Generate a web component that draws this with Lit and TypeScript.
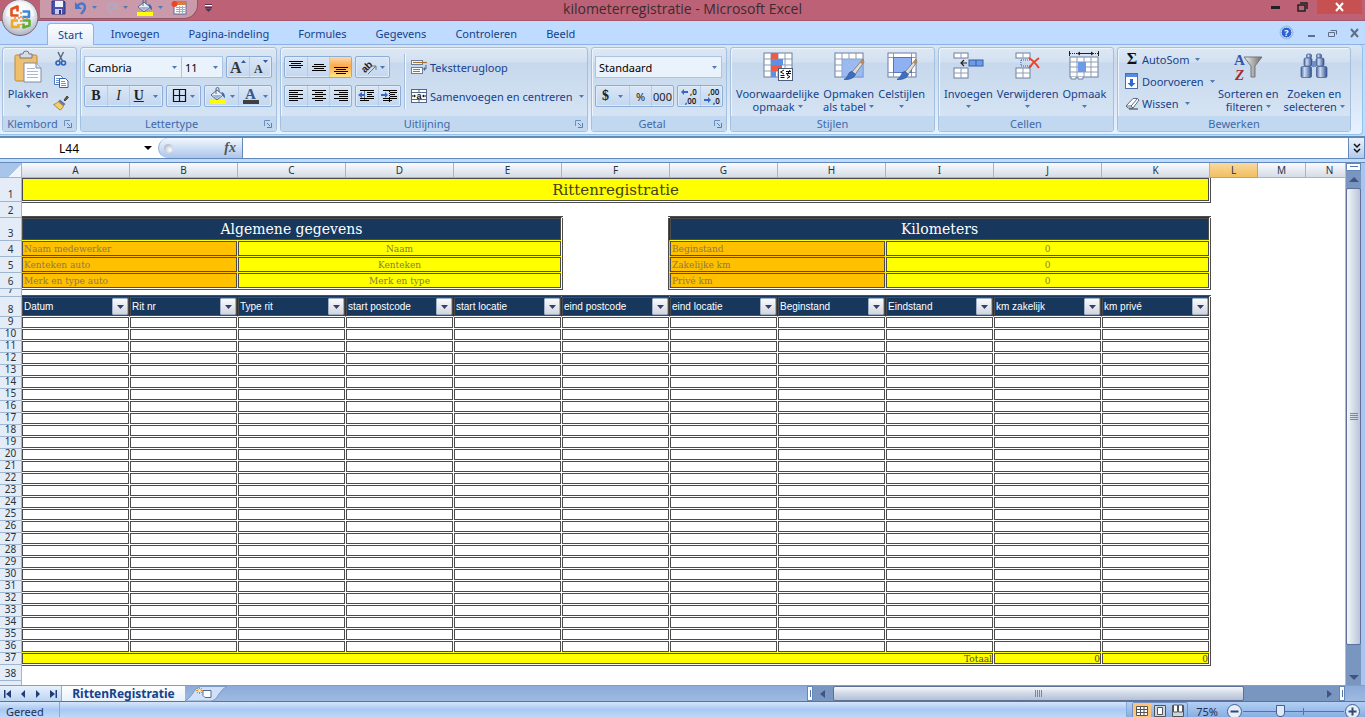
import { LitElement, html, svg, css, nothing } from "lit";
import { customElement, state } from "lit/decorators.js";

type Box = {
  text?: string;
  span?: number;
  kind?: string;
  right?: string;
  bottom?: string;
  filter?: boolean;
};
type Row = { n: number; h: number; cells: Box[]; edge?: string };

const NAVY = "#17375d";
const YELLOW = "#ffff00";
const ORANGE = "#ffc000";
const COLUMNS = "ABCDEFGHIJKLMN".split("");
const FIELDS = [
  "Datum", "Rit nr", "Type rit", "start postcode", "start locatie", "eind postcode",
  "eind locatie", "Beginstand", "Eindstand", "km zakelijk", "km privé",
];

const infoRow = (n: number, l1: string, v1: string, l2: string, last = false): Row => {
  const o = last ? "#fff" : ORANGE;
  const y = last ? "#fff" : YELLOW;
  return {
    n, h: 16, edge: "line",
    cells: [
      { text: l1, span: 2, kind: "label", right: YELLOW, bottom: o },
      { text: v1, span: 3, kind: "value", bottom: y },
      { kind: "sides", right: ORANGE },
      { text: l2, span: 2, kind: "label", right: YELLOW, bottom: o },
      { text: "0", span: 3, kind: "value", bottom: y },
    ],
  };
};

const ROWS: Row[] = [
  { n: 1, h: 24, edge: "line", cells: [{ text: "Rittenregistratie", span: 11, kind: "title" }] },
  {
    n: 2, h: 16,
    cells: [
      { span: 5, kind: "both overhang", bottom: NAVY },
      { kind: "top" },
      { span: 5, kind: "both overhang lead", bottom: NAVY },
    ],
  },
  {
    n: 3, h: 23, edge: "line",
    cells: [
      { text: "Algemene gegevens", span: 5, kind: "section", bottom: YELLOW },
      { kind: "sides", right: NAVY },
      { text: "Kilometers", span: 5, kind: "section", bottom: YELLOW },
    ],
  },
  infoRow(4, "Naam medewerker", "Naam", "Beginstand"),
  infoRow(5, "Kenteken auto", "Kenteken", "Zakelijke km"),
  infoRow(6, "Merk en type auto", "Merk en type", "Privé km", true),
  {
    n: 7, h: 8,
    cells: [
      { span: 5, kind: "both overhang", bottom: NAVY },
      { kind: "under", bottom: NAVY },
      { span: 5, kind: "both overhang lead", bottom: NAVY },
    ],
  },
  {
    n: 8, h: 20, edge: "line",
    cells: FIELDS.map((text, i) => ({ text, kind: "field", filter: true, right: i < 10 ? NAVY : "#fff" })),
  },
  ...Array.from({ length: 28 }, (_, i): Row => ({
    n: 9 + i, h: 12, edge: "line",
    cells: FIELDS.map(() => ({ kind: "empty", bottom: i === 27 ? YELLOW : "#fff" })),
  })),
  {
    n: 37, h: 12, edge: "line",
    cells: [
      { text: "Totaal", span: 9, kind: "total" },
      { text: "0", kind: "total" },
      { text: "0", kind: "total" },
    ],
  },
  { n: 38, h: 16, cells: [{ span: 11, kind: "top overhang" }] },
  { n: 39, h: 16, cells: [{ span: 11 }] },
];

const icon = (w: number, h: number, body: unknown) =>
  html`<svg class="ico" width=${w} height=${h} viewBox="0 0 ${w} ${h}" aria-hidden="true">${body}</svg>`;

const arrow = html`<svg class="arrow" width="5" height="3" viewBox="0 0 5 3" aria-hidden="true"><path d="M0 0h5L2.500 3z" fill="#4f7ab5"/></svg>`;

const bars = (rows: [number, number, number][]) =>
  icon(16, 16, svg`${rows.map(([x, y, w]) => svg`<path d="M${x} ${y}.5h${w}" stroke="#000"/>`)}`);

const bucket = (color: string) => icon(18, 18, svg`
  <path d="M8 3 L14 8 L8 13 L2 8z" fill="#e9eff8" stroke="#53688c"/>
  <path d="M3.500 8 L8 12 L12.500 8z" fill="#9db4d6"/>
  <path d="M7 7V2q0-1.500 1.500-1.500T10 2v3" fill="none" stroke="#53688c"/>
  <path d="M12 5q4 0 4 6q-2-1-2.500-4z" fill="#2f62b5"/>
  <rect x="1" y="13" width="16" height="4" fill=${color}/>`);

const grid = (x: number, y: number, cols: number, rows: number, w: number, h: number) => svg`
  <rect x=${x} y=${y} width=${cols * w} height=${rows * h} fill="#fff" stroke="#6d7f9e"/>
  ${Array.from({ length: cols - 1 }, (_, i) => svg`<path d="M${x + (i + 1) * w} ${y}v${rows * h}" stroke="#8d9cb6"/>`)}
  ${Array.from({ length: rows - 1 }, (_, i) => svg`<path d="M${x} ${y + (i + 1) * h}h${cols * w}" stroke="#8d9cb6"/>`)}`;

const brush = svg`
  <path d="M30 8 L19 21 L22 23.500 L31 11z" fill="#dcdcdc" stroke="#77706a" stroke-width=".8"/>
  <path d="M30 8 L27 11.500 L29.500 13.500 L31 11z" fill="#b98a52"/>
  <path d="M19 20.500 L22.500 23.500 Q20 29 11 28.500 Q15 26 15.500 23 Q16.500 20.500 19 20.500z" fill="#3d6fc0" stroke="#2a4f91" stroke-width=".7"/>`;

const I = {
  office: icon(38, 38, svg`
    <defs><radialGradient id="orb" cx=".5" cy=".35" r=".65"><stop offset="0" stop-color="#fff"/><stop offset=".6" stop-color="#e4e7ee"/><stop offset="1" stop-color="#a9b0c0"/></radialGradient></defs>
    <circle cx="19" cy="17.500" r="18" fill="url(#orb)" stroke="#7f6470"/>
    <path d="M5 16a14 14 0 0 1 28 0q-14 4-28 0z" fill="#fff" opacity=".6"/>
    <g fill="none" stroke-width="2.600" stroke-linejoin="round">
      <path d="M17.500 15.500h-7V9l6-2.500v5" stroke="#e4511f"/>
      <path d="M21.500 11.500h6.500v5.500h-6.500" stroke="#3f86d8"/>
      <path d="M17 20.500h-6v6.500h6.500v-3" stroke="#f0a81e"/>
      <path d="M21.500 20.500h7v5l-6 2v-4" stroke="#63ad35"/>
    </g>
    <path d="M20 12v13M13 18h14" stroke="#e98a2c" stroke-width="1.500" stroke-dasharray="2 2"/>`),
  save: icon(15, 15, svg`
    <path d="M1 1h12l1 1v12H1z" fill="#4a50ad" stroke="#2c3280"/>
    <rect x="4" y="1" width="8" height="6" fill="#eef1fa"/><rect x="4" y="9" width="7" height="5" fill="#c7cde8"/><rect x="8" y="10" width="2" height="4" fill="#2c3280"/>`),
  undo: icon(14, 14, svg`<path d="M3 5Q7 1 10 3.500Q13 7 7 13" fill="none" stroke="#4677c8" stroke-width="2.400"/><path d="M1 1v7h7z" fill="#4677c8"/>`),
  redo: icon(14, 14, svg`<path d="M11 5Q7 1 4 3.500Q1 7 7 13" fill="none" stroke="#b3a8c0" stroke-width="2.400"/><path d="M13 1v7H6z" fill="#b3a8c0"/>`),
  sheet: icon(16, 15, svg`
    <rect x="3" y="2" width="12" height="12" fill="#fff" stroke="#5c6e94"/><rect x="3" y="2" width="12" height="3" fill="#e07a3c"/>
    <path d="M5 7.500h9M5 9.500h9M5 11.500h9M8.500 6v7M11.500 6v7" stroke="#9dacc9"/><circle cx="3.500" cy="4" r="3" fill="#e8472b"/>`),
  custom: icon(7, 8, svg`<path d="M0 0h7v1H0z" fill="#3c3c50"/><path d="M0 3h7v1H0zM0 4.500h7L3.500 8z" fill="#2c3f70"/><path d="M0 1h7v1H0z" fill="#fff"/>`),
  paste: icon(30, 32, svg`
    <rect x="2" y="4" width="22" height="26" rx="1.500" fill="#f0bf6c" stroke="#b98a3e"/>
    <path d="M7 3h3q0-3 3-3t3 3h3v4H7z" fill="#d8dce4" stroke="#6f7787"/>
    <path d="M11 12h12l5 5v14H11z" fill="#fff" stroke="#7b8cab"/><path d="M23 12v5h5" fill="#dce5f3" stroke="#7b8cab"/>
    <path d="M14 17.500h8M14 20.500h11M14 23.500h11M14 26.500h11" stroke="#a8b9d6"/>`),
  cut: icon(16, 16, svg`<path d="M5 1 L9.500 10M10.500 1 L6 10" stroke="#5c6b84" stroke-width="1.500"/><circle cx="5" cy="12" r="2" fill="none" stroke="#2a62be" stroke-width="1.600"/><circle cx="10.500" cy="12" r="2" fill="none" stroke="#2a62be" stroke-width="1.600"/>`),
  copy: icon(16, 16, svg`<path d="M1.500 2.500h6l2 2v7h-8z" fill="#fff" stroke="#4f79bd"/><path d="M3 5.500h4M3 7.500h4M3 9.500h3" stroke="#6f95cf"/><path d="M6.500 5.500h6l2.500 2.500v6.500H6.500z" fill="#fff" stroke="#3763ad"/><path d="M8 8.500h4M8 10.500h5M8 12.500h5" stroke="#6f95cf"/>`),
  painter: icon(16, 16, svg`<path d="M11 5l3-4 1.500 1.500L12 6z" fill="#68584a" stroke="#4f4238"/><path d="M7 4.500l5.500 4.500-2 2-5.500-4.500z" fill="#6577a6"/><path d="M5 6.500l5.500 4.500Q9 14.500 7 15L.5 9.500Q4 9 5 6.500z" fill="#f3d06a" stroke="#b58a33"/>`),
  growA: icon(16, 16, svg`<text x="0" y="14" font-family="Liberation Serif, serif" font-weight="700" font-size="16" fill="#333">A</text><path d="M11 4h5l-2.500-3z" fill="#2e5ca8"/>`),
  shrinkA: icon(16, 16, svg`<text x="1" y="14" font-family="Liberation Serif, serif" font-weight="700" font-size="12" fill="#333">A</text><path d="M10 1h5l-2.500 3z" fill="#2e5ca8"/>`),
  borders: icon(14, 14, svg`<path d="M.5.500h12v12H.500zM6.500 0v13M0 6.500h13" fill="none" stroke="#111" stroke-width="1.200"/>`),
  fontColor: icon(18, 18, svg`<text x="3" y="12" font-family="Liberation Serif, serif" font-weight="700" font-size="15" fill="#36588f">A</text><rect x="1" y="13" width="16" height="4" fill="#404040"/>`),
  top: bars([[1, 2, 14], [3, 4, 10], [1, 6, 14], [3, 8, 10]]),
  middle: bars([[3, 5, 10], [1, 7, 14], [3, 9, 10], [1, 11, 14]]),
  bottom: bars([[1, 8, 14], [3, 10, 10], [1, 12, 14], [3, 14, 10]]),
  left: bars([[1, 2, 14], [1, 4, 9], [1, 6, 14], [1, 8, 9], [1, 10, 14], [1, 12, 9]]),
  center: bars([[1, 2, 14], [4, 4, 8], [1, 6, 14], [4, 8, 8], [1, 10, 14], [4, 12, 8]]),
  right: bars([[1, 2, 14], [6, 4, 9], [1, 6, 14], [6, 8, 9], [1, 10, 14], [6, 12, 9]]),
  rotate: icon(16, 16, svg`<text x="0" y="11" transform="rotate(-45 6 8)" font-family="Liberation Sans, sans-serif" font-weight="700" font-size="10" fill="#222">ab</text><path d="M7 15 L15 7M15 11V7h-4" fill="none" stroke="#777"/>`),
  outdent: icon(18, 16, svg`<path d="M2 2.500h14M9 4.500h7M9 6.500h5M9 8.500h7M2 10.500h14M2 12.500h9" stroke="#000" stroke-width="1.200"/><path d="M6.500 3.500v10" stroke="#000" stroke-dasharray="1 1"/><path d="M0 7l4-3v2h3v2H4v2z" fill="#3468c8"/>`),
  indent: icon(18, 16, svg`<path d="M2 2.500h14M9 4.500h7M9 6.500h5M9 8.500h7M2 10.500h14M2 12.500h9" stroke="#000" stroke-width="1.200"/><path d="M8.500 3v11" stroke="#000" stroke-dasharray="1 1"/><path d="M7 7L4 4v2H0v2h4v2z" fill="#3468c8"/>`),
  wrap: icon(16, 16, svg`<rect x=".5" y="1.500" width="11" height="4" fill="#fff" stroke="#6c7d9c"/><path d="M2 3.500h14" stroke="#a8712f" stroke-width="1.200"/><rect x=".5" y="8.500" width="11" height="6" fill="#fff" stroke="#6c7d9c"/><path d="M2 10.500h7M2 12.500h7" stroke="#a8712f"/><path d="M15 6v4h-2" fill="none" stroke="#44618f"/><path d="M12 10l2-2v4z" fill="#44618f"/>`),
  merge: icon(16, 16, svg`<rect x=".5" y="1.500" width="15" height="13" fill="#fff" stroke="#54688f"/><path d="M0 4.500h16M0 11.500h16M8 1v3M8 12v3" stroke="#54688f"/><text x="5.500" y="10.500" font-family="Liberation Sans, sans-serif" font-weight="700" font-size="9" fill="#111">a</text><path d="M1 8h3M12 8h3" stroke="#111"/><path d="M5 8L3 6.500v3zM11 8l2-1.500v3z" fill="#111"/>`),
  incDec: icon(18, 18, svg`<g font-family="Noto Sans, sans-serif" font-size="8" font-weight="600" fill="#222"><text x="10" y="8">,0</text><text x="5" y="17">,00</text></g><path d="M1 5l3-3v2h4v2H4v2z" fill="#3468c8"/>`),
  decDec: icon(18, 18, svg`<g font-family="Noto Sans, sans-serif" font-size="8" font-weight="600" fill="#222"><text x="5" y="8">,00</text><text x="10" y="17">,0</text></g><path d="M8 13L5 10v2H1v2h4v2z" fill="#3468c8"/>`),
  cond: icon(32, 32, svg`${grid(2, 2, 4, 4, 7, 6)}
    <rect x="9" y="2" width="7" height="6" fill="#ee5a43"/><rect x="9" y="8" width="12" height="6" fill="#5f8fe6"/><rect x="9" y="14" width="11" height="6" fill="#ee5a43"/><rect x="9" y="20" width="5" height="6" fill="#5f8fe6"/>
    <rect x="16.500" y="17.500" width="14" height="12" fill="#fff" stroke="#4d5e7c"/>
    <path d="M22 19l-3.500 2 3.500 2M18.500 24.500h4M18.500 26.500h4M24 20.500h5M24 22.500h5M28 19l-3 5M25 24l3 1.700-3 1.700" fill="none" stroke="#111"/>`),
  table: icon(32, 32, svg`${grid(2, 2, 4, 4, 7, 6)}<rect x="9" y="8" width="21" height="18" fill="#7ba3ee" opacity=".75"/><path d="M9 14h21M9 20h21M16 8v18M23 8v18" stroke="#a9c4f5"/>${brush}`),
  styles: icon(32, 32, svg`<rect x="2" y="2" width="28" height="24" fill="#fff" stroke="#6d7f9e"/><path d="M7.500 2v24M25.500 2v24M2 6.500h28M2 21.500h28" stroke="#8d9cb6"/><rect x="7.500" y="6.500" width="18" height="15" fill="#8fb1f2" stroke="#4f79c8"/>${brush}`),
  insert: icon(32, 32, svg`${grid(2, 2, 2, 1, 7, 5)}${grid(2, 17, 2, 2, 7, 5)}<rect x="17" y="9" width="14" height="6" fill="#6f9ae6" stroke="#345ea8"/><path d="M24 9v6" stroke="#345ea8"/><path d="M9 12h6M12 9l-3 3 3 3" fill="none" stroke="#222" stroke-width="1.200"/>`),
  remove: icon(32, 32, svg`${grid(4, 2, 2, 1, 7, 5)}${grid(4, 17, 2, 2, 7, 5)}<path d="M9 9h12M9 15h12M9 9v6" stroke="#345ea8" stroke-dasharray="1 1"/><path d="M17 7 Q22 10 27 17M27 7 Q21 11 17 17" fill="none" stroke="#ef4023" stroke-width="2"/>`),
  format: icon(32, 32, svg`${grid(2, 6, 4, 4, 7, 5)}<rect x="10" y="11" width="8" height="10" fill="#6f9ae6"/><path d="M2 2.500h8M25 2.500h5" stroke="#222" stroke-dasharray="1 1"/><path d="M10 2.500h15" stroke="#222"/><path d="M9 2.500l3-2v4zM26 2.500l-3-2v4z" fill="#222"/><path d="M1.500 0v5M30.500 0v5" stroke="#222"/><path d="M3 26v2h5v-2M10 26v2h5v-2" fill="#fff" stroke="#6d7f9e"/>`),
  fill: icon(14, 16, svg`<rect x=".5" y=".5" width="12" height="15" fill="#fff" stroke="#4b6ea9"/><rect x="1" y="1" width="11" height="3" fill="#5b8ade"/><path d="M5 6h3v4h2.500L6.500 14 2.500 10H5z" fill="#2f66cf"/>`),
  erase: icon(14, 14, svg`<path d="M1 10 L8 2.500h4.500L14 4 8 12H3z" fill="#fff" stroke="#5f6b80"/><path d="M1 10h5l6.500-7.500M6 10l2 2" fill="none" stroke="#5f6b80"/><path d="M4 13h9" stroke="#333"/>`),
  sort: icon(32, 32, svg`<text x="2" y="14" font-family="Liberation Serif, serif" font-weight="700" font-size="15" fill="#2f58b0">A</text><text x="3" y="29" font-family="Liberation Serif, serif" font-style="italic" font-weight="700" font-size="15" fill="#a32d2d">Z</text><defs><linearGradient id="fun"><stop offset="0" stop-color="#f2f2f2"/><stop offset="1" stop-color="#6b6b6b"/></linearGradient></defs><path d="M12 6h18l-7 9v11h-4V15z" fill="url(#fun)" stroke="#777"/>`),
  find: icon(32, 32, svg`<defs><linearGradient id="bin"><stop offset="0" stop-color="#4468a8"/><stop offset=".35" stop-color="#cfdcf2"/><stop offset="1" stop-color="#2d4f8f"/></linearGradient></defs>
    <g fill="url(#bin)" stroke="#3c5487" stroke-width=".7"><rect x="8.500" y="3" width="5" height="4" rx="1.500"/><rect x="18.500" y="3" width="5" height="4" rx="1.500"/><rect x="6" y="7" width="8" height="8" rx="1.500"/><rect x="18" y="7" width="8" height="8" rx="1.500"/><rect x="3" y="15.500" width="10.500" height="11" rx="1.500"/><rect x="18.500" y="15.500" width="10.500" height="11" rx="1.500"/></g><rect x="14" y="10" width="4" height="6" fill="#6e8fc8"/>`),
  help: icon(15, 15, svg`<circle cx="7.500" cy="7.500" r="6.500" fill="#2a63cf" stroke="#9db8e3"/><circle cx="7.500" cy="7.500" r="5.500" fill="none" stroke="#fff"/><text x="7.500" y="11" text-anchor="middle" font-family="Noto Sans, sans-serif" font-weight="700" font-size="9" fill="#fff">?</text>`),
  newSheet: icon(46, 15, svg`<path d="M0 15 Q4 13 8 7 Q12 0 16 0.500 H42 Q38 2 34 8 Q30 15 26 15z" fill="#cfe0f8" stroke="#7c9cc9"/><path d="M18 4.500h8v7h-6l-2-2z" fill="#fff" stroke="#4f6c9e"/><path d="M14.500 1v7M11 4.500h7M12 2l5 5M17 2l-5 5" stroke="#e38a1c"/><circle cx="14.500" cy="4.500" r="1.500" fill="#fff3a0"/>`),
};

const launcher = html`<button class="launch" aria-label="Dialoogvenster openen"><svg width="8" height="8" viewBox="0 0 8 8"><path d="M.5 6V.5H6" fill="none" stroke="#6d8fbf"/><path d="M3 3l3 3M7.500 3v4.500H3" fill="none" stroke="#5a7fb5"/></svg></button>`;

@customElement("app-root")
export class AppRoot extends LitElement {
  @state() private tab = "Start";

  static styles = css`
    :host { display: block; height: 100vh; overflow: hidden; font-family: "Noto Sans", sans-serif; font-size: 11px; color: #15428b; }
    * { box-sizing: border-box; }
    button, select, input { font: inherit; color: inherit; margin: 0; padding: 0; border: 0; background: none; border-radius: 0; }
    button { display: flex; align-items: center; justify-content: center; gap: 4px; white-space: nowrap; }
    svg { display: block; flex: none; overflow: visible; }
    .window { display: flex; flex-direction: column; height: 100%; background: #bfdbff; }

    .titlebar { position: relative; flex: none; display: grid; grid-template-columns: 1fr auto 1fr; height: 21px; background: #bd6177; border-bottom: 1px solid #a4566c; }
    .office { position: absolute; z-index: 2; left: 1px; top: 0; border-radius: 50%; }
    .quick { display: flex; align-items: start; gap: 7px; }
    .pill { display: flex; align-items: center; gap: 8px; height: 19px; margin-left: 40px; padding: 0 10px 3px 11px; background: #ca9aab; border: 1px solid #8f5568; border-top: 0; border-left: 0; border-radius: 0 0 14px 0; }
    .quick > button { margin-top: 4px; }
    .caption { margin: 0; font-family: "Open Sans", sans-serif; font-weight: 400; font-size: 14px; line-height: 17px; color: #3a2c30; }
    .sys { display: flex; justify-content: flex-end; align-items: start; padding-right: 3px; }
    .sys button { width: 27px; height: 14px; }
    .sys .close { width: 45px; margin-left: 1px; background: #c75050; }

    .tabs { flex: none; display: flex; height: 24px; padding-left: 44px; background: #bfdbff; border-bottom: 1px solid #8db2e3; }
    .tabs .tab { height: 24px; padding: 0 14px; margin-right: 1px; }
    .tabs .tab.on { margin: 2px 3px 0 3px; height: 22px; background: linear-gradient(#fbfdff, #e3ecf7); border: 1px solid #8db2e3; border-bottom: 0; border-radius: 4px 4px 0 0; padding: 0 10px; }
    .mdi { display: flex; gap: 13px; align-items: center; margin-left: auto; padding-right: 6px; }

    .ribbon { flex: none; display: flex; gap: 3px; height: 90px; margin-right: 2px; padding: 2px 12px 2px 2px; background: linear-gradient(#dbe6f4, #c9d9ed 20%, #e7f2ff); border-bottom: 1px solid #8fc3e8; border-right: 1px solid #8fc3e8; border-radius: 0 4px 4px 0; }
    .group { flex: none; display: flex; flex-direction: column; height: 85px; border: 1px solid #a5bfdf; border-radius: 3px; background: linear-gradient(#dde8f5 0, #d3e0f0 14px, #c7d8ed 15px, #d9e7f5 100%); box-shadow: inset 1px 1px #eef4fb; }
    .body { flex: 1; display: flex; min-height: 0; }
    .foot { display: flex; align-items: center; height: 15px; background: #c1d8f0; color: #3e6aaa; border-radius: 0 0 3px 3px; }
    .foot span { flex: 1; text-align: center; }
    .foot .launch { width: 12px; margin-right: 2px; }
    .clip { width: 75px; } .font { width: 197px; } .align { width: 308px; } .num { width: 136px; } .sty { width: 205px; } .cel { width: 176px; } .edit { width: 234px; }

    .stack { display: flex; flex-direction: column; gap: 7px; padding: 8px 3px 0; }
    .line { display: flex; gap: 3px; height: 22px; }
    .set { display: flex; height: 22px; border: 1px solid #8badd8; border-radius: 2px; background: linear-gradient(#d9e6f6, #c3d7f0); box-shadow: inset 0 0 0 1px #e2ecf8; }
    .set button { width: 22px; }
    .set button + button { border-left: 1px solid #b5cbe8; }
    .set .wide { width: 33px; gap: 3px; }
    .set .hot { background: linear-gradient(#fcd9ab, #fda949 45%, #ffe48a); }
    .set.mono { color: #222; }
    .glyph { font-family: "Liberation Serif", serif; font-weight: 700; font-size: 14px; color: #222; }
    .it { font-style: italic; font-weight: 400; } .un { text-decoration: underline; }
    select { appearance: none; height: 22px; padding-left: 3px; background: #eaf2fb url("data:image/svg+xml,%3Csvg xmlns='http://www.w3.org/2000/svg' width='5' height='3'%3E%3Cpath d='M0 0h5L2.5 3z' fill='%234f7ab5'/%3E%3C/svg%3E") no-repeat right 4px center; border: 1px solid #abc4e4; color: #000; }
    .family { width: 98px; } .size { width: 42px; margin-left: -4px; } .format { width: 127px; }
    .rule { width: 1px; margin: 6px 3px 7px 0; background: #a5bfdf; box-shadow: 1px 0 #f3f8fd; }
    .plain { height: 22px; gap: 3px; justify-content: flex-start; }
    .plain .arrow { margin-left: 3px; }

    .big { flex-direction: column; justify-content: flex-start; gap: 0; padding-top: 3px; line-height: 13px; white-space: pre; }
    .big .ico { margin-bottom: 4px; }
    .big .last { display: flex; align-items: center; justify-content: center; gap: 3px; height: 13px; }
    .sty .body, .cel .body { padding-left: 5px; gap: 4px; }
    .edit .body { padding-left: 7px; }
    .clip .big { width: 50px; }
    .small { display: flex; flex-direction: column; }
    .small button { height: 22px; }
    .edit .small { width: 93px; }
    .edit .small .ico, .sigma { width: 14px; }
    .sigma { font-family: "Liberation Serif", serif; font-weight: 700; font-size: 16px; color: #111; }
    .edit .big + .big { margin-left: 5px; }

    .formula { flex: none; display: flex; height: 23px; margin-top: 1px; background: #fff; border: 1px solid #6289b9; border-width: 2px 1px 1px 0; color: #000; }
    .namebox { width: 158px; display: flex; align-items: center; gap: 6px; padding-right: 6px; }
    .namebox input { flex: 1; min-width: 0; text-align: center; font-size: 12px; }
    .fx { display: flex; align-items: center; justify-content: space-between; width: 85px; padding: 0 6px 0 5px; background: linear-gradient(#f3f8fe, #abc5eb); border: 1px solid #8fadd6; border-width: 0 1px 0 1px; border-right-color: #6289b9; border-radius: 12px 0 0 12px; }
    .knob { width: 9px; height: 9px; border-radius: 50%; background: radial-gradient(circle at 65% 65%, #fff, #9aa5b8); }
    .fx em { font-family: "Liberation Serif", serif; font-weight: 700; font-size: 14px; color: #555; }
    .entry { flex: 1; min-width: 0; }
    .expand { width: 16px; border-left: 1px solid #6289b9; background: linear-gradient(#eaf2fc, #b3caec); }

    .work { flex: 1; min-height: 0; display: flex; margin-top: 3px; border-top: 1px solid #6289b9; background: #a9c4ef; }
    .pane { flex: 1; min-width: 0; overflow: hidden; background: #fff; }
    table { table-layout: fixed; width: 1354px; border-collapse: separate; border-spacing: 0; }
    .c0 { width: 22px; } .c1 { width: 108px; } .c2 { width: 48px; }
    th, td { padding: 0; font-weight: 400; }
    th { color: #27323f; background: #e4ecf7; border: 0 solid #9eb6ce; border-width: 0 1px 1px 0; }
    thead th { height: 15px; line-height: 14px; background: linear-gradient(#f9fafc, #d5dce8); font-size: 10px; }
    thead th.on { background: linear-gradient(#f9d99f, #f1bf60); border-color: #f29536; }
    thead th.corner { background: linear-gradient(135deg, #a9c4e9 65%, #f0f5fc 65%); }
    .rowno { display: flex; align-items: flex-end; justify-content: center; height: calc(var(--h) - 1px); line-height: 13px; font-size: 10px; }
    .rowno.thin { overflow: hidden; }
    td { border: 0 solid #fff; border-width: 0 1px 1px 0; }
    .box { display: flex; align-items: center; height: calc(var(--h) - 1px); border: 0 solid #4c4c4c; white-space: nowrap; font-family: "DejaVu Serif", serif; line-height: 10px; }
    .title, .section, .label, .value, .field, .empty, .total { border-width: 1px; }
    .title { justify-content: center; background: #ff0; color: #3f3f1c; font-size: 15px; }
    .section { justify-content: center; background: #17375d; color: #fff; font-size: 14px; }
    .label { padding-left: 1px; background: #ffc000; color: #8a7a50; font-size: 9px; }
    .value { justify-content: center; background: #ff0; color: #7f7f3a; font-size: 9px; }
    .field { justify-content: space-between; padding-left: 1px; background: #17375d; color: #fff; font-family: "Liberation Sans", sans-serif; font-size: 10px; }
    .total { justify-content: flex-end; background: #ff0; color: #4c4c1c; font-size: 9px; }
    .sides { border-width: 0 1px; height: var(--h); margin-bottom: -1px; }
    .both { border-width: 1px 0; } .top { border-width: 1px 0 0; } .under { border-width: 0 0 1px; }
    .overhang { margin-right: -2px; }
    .lead { margin-left: -2px; }
    .line-left { border-width: 0 0 0 1px; height: var(--h); margin-bottom: -1px; }
    .filter { width: 16px; height: 17px; background: linear-gradient(#fafafa, #d3d6dc); border: 1px solid #9fb0cc; border-radius: 1px; }

    .vscroll { flex: none; display: flex; flex-direction: column; width: 16px; margin-right: 4px; border-left: 1px solid #a3bde3; background: #7996c0; }
    .split { flex: none; height: 8px; background: #fff; border: 1px solid #6289b9; display: flex; align-items: center; justify-content: center; }
    .step { flex: none; height: 17px; }
    .thumb { background: linear-gradient(90deg, #f4f6fa, #d5dde9 50%, #b9c6da); border: 1px solid #5f6f97; border-radius: 2px; display: flex; align-items: center; justify-content: center; }
    .vscroll .thumb { height: 457px; } .vscroll .rest { flex: 1; }

    .bottom { flex: none; display: flex; height: 17px; background: linear-gradient(#8cabd9, #9fbae2); border-top: 1px solid #7f9fcb; border-bottom: 1px solid #4f76ab; }
    .nav { display: flex; width: 62px; background: linear-gradient(#e8f1fc, #bdd4f3); border-right: 1px solid #8fadd6; }
    .nav button { flex: 1; }
    .sheet { width: 123px; background: linear-gradient(#fff, #e7f0fb); font-weight: 700; font-size: 12px; line-height: 14px; }
    .fill { flex: 1; }
    .hscroll { display: flex; width: 538px; background: #7996c0; }
    .hscroll .split { width: 6px; height: 15px; }
    .hscroll .step { width: 20px; height: 15px; }
    .hscroll .thumb { width: 411px; background: linear-gradient(#f6f8fb, #cfd8e6 50%, #b4c1d6); }
    .hscroll .rest { flex: 1; }
    .end { width: 20px; }

    .status { flex: none; display: flex; align-items: stretch; height: 15px; background: linear-gradient(#d5e6fb, #a9c9f3 50%, #bdd7f8); color: #1c2f55; }
    .ready { width: 60px; padding-left: 6px; line-height: 19px; border-right: 1px solid #87a9d8; }
    .zoomer { display: flex; align-items: start; width: 239px; background: linear-gradient(#b4cff3, #86aee3); border-left: 1px solid #87a9d8; padding-left: 5px; }
    .views { display: flex; height: 18px; border: 1px solid #6f90c3; border-radius: 2px; }
    .views button { width: 18px; height: 16px; } .views .on { background: #fcc579; }
    .pct { width: 38px; line-height: 19px; text-align: center; }
    .zoomer svg.zb { margin-top: 1px; }
    .zoomer input { appearance: none; flex: 1; min-width: 0; height: 18px; background: linear-gradient(#56739f, #56739f) 60% center / 1px 7px no-repeat, linear-gradient(#56739f, #56739f) center / 100% 1px no-repeat; }
    .zoomer input::-webkit-slider-thumb { appearance: none; width: 9px; height: 12px; background: #dfe9f8; border: 1px solid #45608f; border-radius: 1px 1px 5px 5px; }
    .gap { width: 4px; }
  `;

  private big(ico: unknown, first: string, second = "") {
    return html`<button class="big">${ico}<span>${first}</span><span class="last">${second}${arrow}</span></button>`;
  }

  private group(cls: string, name: string, body: unknown, launch = false) {
    return html`<section class="group ${cls}" aria-label=${name}>
      <div class="body">${body}</div>
      <div class="foot"><span>${name}</span>${launch ? launcher : nothing}</div>
    </section>`;
  }

  private ribbon() {
    return html`<div class="ribbon">
      ${this.group("clip", "Klembord", html`
        ${this.big(I.paste, "Plakken")}
        <div class="small">
          <button aria-label="Knippen">${I.cut}</button>
          <button aria-label="Kopiëren">${I.copy}</button>
          <button aria-label="Opmaak kopiëren">${I.painter}</button>
        </div>`, true)}
      ${this.group("font", "Lettertype", html`<div class="stack">
        <div class="line">
          <select class="family" aria-label="Lettertype"><option>Cambria</option></select>
          <select class="size" aria-label="Tekengrootte"><option>11</option></select>
          <div class="set"><button aria-label="Groter">${I.growA}</button><button aria-label="Kleiner">${I.shrinkA}</button></div>
        </div>
        <div class="line">
          <div class="set"><button class="glyph">B</button><button class="glyph it">I</button><button class="glyph wide"><span class="un">U</span>&nbsp;${arrow}</button></div>
          <div class="set"><button class="wide" aria-label="Randen">${I.borders}${arrow}</button></div>
          <div class="set"><button class="wide" aria-label="Opvulkleur">${bucket("#ffff00")}${arrow}</button><button class="wide" aria-label="Tekstkleur">${I.fontColor}${arrow}</button></div>
        </div></div>`, true)}
      ${this.group("align", "Uitlijning", html`
        <div class="stack">
          <div class="line">
            <div class="set"><button aria-label="Boven">${I.top}</button><button aria-label="Midden">${I.middle}</button><button class="hot" aria-label="Onder">${I.bottom}</button></div>
            <div class="set"><button class="wide" aria-label="Afdrukstand">${I.rotate}${arrow}</button></div>
          </div>
          <div class="line">
            <div class="set"><button aria-label="Links">${I.left}</button><button aria-label="Centreren">${I.center}</button><button aria-label="Rechts">${I.right}</button></div>
            <div class="set"><button aria-label="Inspringing verkleinen">${I.outdent}</button><button aria-label="Inspringing vergroten">${I.indent}</button></div>
          </div>
        </div>
        <div class="rule"></div>
        <div class="stack">
          <button class="plain">${I.wrap}Tekstterugloop</button>
          <button class="plain">${I.merge}Samenvoegen en centreren${arrow}</button>
        </div>`, true)}
      ${this.group("num", "Getal", html`<div class="stack">
        <div class="line"><select class="format" aria-label="Getalnotatie"><option>Standaard</option></select></div>
        <div class="line">
          <div class="set mono"><button class="wide"><span class="glyph">$</span>&nbsp;${arrow}</button><button>%</button><button>000</button></div>
          <div class="set"><button aria-label="Meer decimalen">${I.incDec}</button><button aria-label="Minder decimalen">${I.decDec}</button></div>
        </div></div>`, true)}
      ${this.group("sty", "Stijlen", html`
        ${this.big(I.cond, "Voorwaardelijke", "opmaak")}
        ${this.big(I.table, "Opmaken", "als tabel")}
        ${this.big(I.styles, "Celstijlen")}`)}
      ${this.group("cel", "Cellen", html`
        ${this.big(I.insert, "Invoegen")}${this.big(I.remove, "Verwijderen")}${this.big(I.format, "Opmaak")}`)}
      ${this.group("edit", "Bewerken", html`
        <div class="small">
          <button class="plain"><span class="sigma">Σ</span>AutoSom${arrow}</button>
          <button class="plain">${I.fill}Doorvoeren${arrow}</button>
          <button class="plain">${I.erase}Wissen${arrow}</button>
        </div>
        ${this.big(I.sort, "Sorteren en", "filteren")}
        ${this.big(I.find, "Zoeken en", "selecteren")}`)}
    </div>`;
  }

  private cell(c: Box) {
    return html`<td colspan=${c.span ?? 1} style="border-right-color:${c.right ?? "#fff"};border-bottom-color:${c.bottom ?? "#fff"}"><div class="box ${c.kind ?? ""}">${c.text ?? ""}${c.filter
      ? html`<button class="filter" aria-label="Filter ${c.text}"><svg width="7" height="4" viewBox="0 0 7 4"><path d="M0 0h7L3.500 4z" fill="#2e3f77"/></svg></button>`
      : nothing}</div></td>`;
  }

  private sheet() {
    return html`<table>
      <colgroup><col class="c0">${COLUMNS.map((c) => html`<col class=${c > "K" ? "c2" : "c1"}>`)}</colgroup>
      <thead><tr><th class="corner"></th>${COLUMNS.map((c) => html`<th scope="col" class=${c === "L" ? "on" : ""}>${c}</th>`)}</tr></thead>
      <tbody>${ROWS.map((r) => html`<tr style="--h:${r.h}px">
        <th scope="row"><div class="rowno ${r.h < 12 ? "thin" : ""}">${r.n}</div></th>
        ${r.cells.map((c) => this.cell(c))}
        <td colspan="3"><div class="box ${r.edge ? "line-left" : ""}"></div></td>
      </tr>`)}</tbody>
    </table>`;
  }

  render() {
    const tabs = ["Start", "Invoegen", "Pagina-indeling", "Formules", "Gegevens", "Controleren", "Beeld"];
    const tri = (d: string, fill = "#1f3c75") => html`<svg width="12" height="8" viewBox="0 0 12 8"><path d=${d} fill=${fill}/></svg>`;
    const dim = "#3f5384";
    return html`<div class="window">
      <header class="titlebar">
        <button class="office" aria-label="Office-knop">${I.office}</button>
        <div class="quick">
          <div class="pill">
            <button aria-label="Opslaan">${I.save}</button>
            <button aria-label="Ongedaan maken">${I.undo}${arrow}</button>
            <button aria-label="Opnieuw">${I.redo}${arrow}</button>
            <button aria-label="Opvulkleur">${bucket("#ffff00")}${arrow}</button>
            <button aria-label="Tabel">${I.sheet}</button>
          </div>
          <button aria-label="Werkbalk aanpassen">${I.custom}</button>
        </div>
        <h1 class="caption">kilometerregistratie - Microsoft Excel</h1>
        <div class="sys">
          <button aria-label="Minimaliseren"><svg width="9" height="3"><path d="M0 0h9v3H0z" fill="#222"/></svg></button>
          <button aria-label="Verkleinen"><svg width="11" height="9"><path d="M1 2h7v6H1zM3 0h7v6" fill="none" stroke="#222" stroke-width="1.500"/></svg></button>
          <button class="close" aria-label="Sluiten"><svg width="9" height="8"><path d="M1 0l7 8M8 0L1 8" stroke="#fff" stroke-width="2"/></svg></button>
        </div>
      </header>
      <nav class="tabs">
        ${tabs.map((t) => html`<button class="tab ${t === this.tab ? "on" : ""}" @click=${() => (this.tab = t)}>${t}</button>`)}
        <div class="mdi">
          <button aria-label="Help">${I.help}</button>
          <button aria-label="Minimaliseren"><svg width="8" height="8"><path d="M1 6h7v2H1z" fill="#5f6e84"/></svg></button>
          <button aria-label="Herstellen"><svg width="9" height="8"><path d="M.5 3.500h6v4h-6zM2.500 1.500h6v4" fill="none" stroke="#5f6e84"/></svg></button>
          <button aria-label="Sluiten"><svg width="9" height="8"><path d="M1 0l7 8M8 0L1 8" stroke="#5f6e84" stroke-width="2"/></svg></button>
        </div>
      </nav>
      ${this.ribbon()}
      <div class="formula">
        <div class="namebox"><input aria-label="Naamvak" value="L44"><svg width="8" height="4"><path d="M0 0h8L4 4z" fill="#000"/></svg></div>
        <div class="fx"><span class="knob"></span><em>fx</em></div>
        <input class="entry" aria-label="Formulebalk">
        <button class="expand" aria-label="Uitvouwen"><svg width="8" height="9"><path d="M1 0l3 3 3-3M1 5l3 3 3-3" fill="none" stroke="#111" stroke-width="1.500"/></svg></button>
      </div>
      <main class="work">
        <div class="pane">${this.sheet()}</div>
        <div class="vscroll">
          <div class="split"><svg width="8" height="2"><path d="M0 0h8v1H0z" fill="#4f76ab"/></svg></div>
          <button class="step" aria-label="Omhoog">${tri("M1 6h10L6 1z", dim)}</button>
          <div class="thumb"><svg width="8" height="7"><path d="M0 .5h8M0 2.500h8M0 4.500h8M0 6.500h8" stroke="#7686a3"/></svg></div>
          <div class="rest"></div>
          <button class="step" aria-label="Omlaag">${tri("M1 2h10L6 7z", dim)}</button>
        </div>
      </main>
      <div class="bottom">
        <div class="nav">
          <button aria-label="Eerste blad">${tri("M2 0h1.500v8H2zM9 0v8L4 4z")}</button>
          <button aria-label="Vorig blad">${tri("M8 0v8L4 4z")}</button>
          <button aria-label="Volgend blad">${tri("M4 0v8l4-4z")}</button>
          <button aria-label="Laatste blad">${tri("M8.500 0H10v8H8.500zM3 0v8l5-4z")}</button>
        </div>
        <button class="sheet">RittenRegistratie</button>
        <button aria-label="Nieuw blad">${I.newSheet}</button>
        <div class="fill"></div>
        <div class="hscroll">
          <div class="split"><svg width="1" height="7"><path d="M0 0h1v7H0z" fill="#4f76ab"/></svg></div>
          <button class="step" aria-label="Naar links">${tri("M8 0v8L3 4z", dim)}</button>
          <div class="thumb"><svg width="8" height="7"><path d="M.5 0v7M2.500 0v7M4.500 0v7M6.500 0v7" stroke="#7686a3"/></svg></div>
          <div class="rest"></div>
          <button class="step" aria-label="Naar rechts">${tri("M4 0v8l5-4z", dim)}</button>
          <div class="split"><svg width="1" height="7"><path d="M0 0h1v7H0z" fill="#4f76ab"/></svg></div>
        </div>
        <div class="end"></div>
      </div>
      <footer class="status">
        <div class="ready">Gereed</div>
        <div class="fill"></div>
        <div class="zoomer">
          <div class="views">
            <button class="on" aria-label="Normaal"><svg width="12" height="12"><path d="M.5 1.500h11v9H.5zM.5 4.500h11M.5 7.500h11M4.500 1v9M8 1v9" fill="#fff" stroke="#555"/></svg></button>
            <button aria-label="Pagina-indeling"><svg width="12" height="12"><path d="M.5.500h11v11H.500z" fill="#ccd6e4" stroke="#555"/><path d="M3.500 2.500h5v7h-5z" fill="#fff" stroke="#555"/></svg></button>
            <button aria-label="Pagina-eindevoorbeeld"><svg width="12" height="12"><path d="M.5.500h11v11H.500z" fill="#ccd6e4" stroke="#555"/><path d="M1.500 0h4v7h-4zM6.500 0h4v7h-4z" fill="#fff" stroke="#555"/></svg></button>
          </div>
          <span class="pct">75%</span>
          <svg class="zb" width="17" height="17"><circle cx="8.500" cy="8.500" r="7" fill="#e5eefa" stroke="#45608f"/><path d="M4.500 8.500h8" stroke="#33486f" stroke-width="2"/></svg>
          <input type="range" min="10" max="190" value="75" aria-label="In-/uitzoomen">
          <svg class="zb" width="17" height="17"><circle cx="8.500" cy="8.500" r="7" fill="#e5eefa" stroke="#45608f"/><path d="M4.500 8.500h8M8.500 4.500v8" stroke="#33486f" stroke-width="2"/></svg>
          <div class="gap"></div>
        </div>
      </footer>
    </div>`;
  }
}
